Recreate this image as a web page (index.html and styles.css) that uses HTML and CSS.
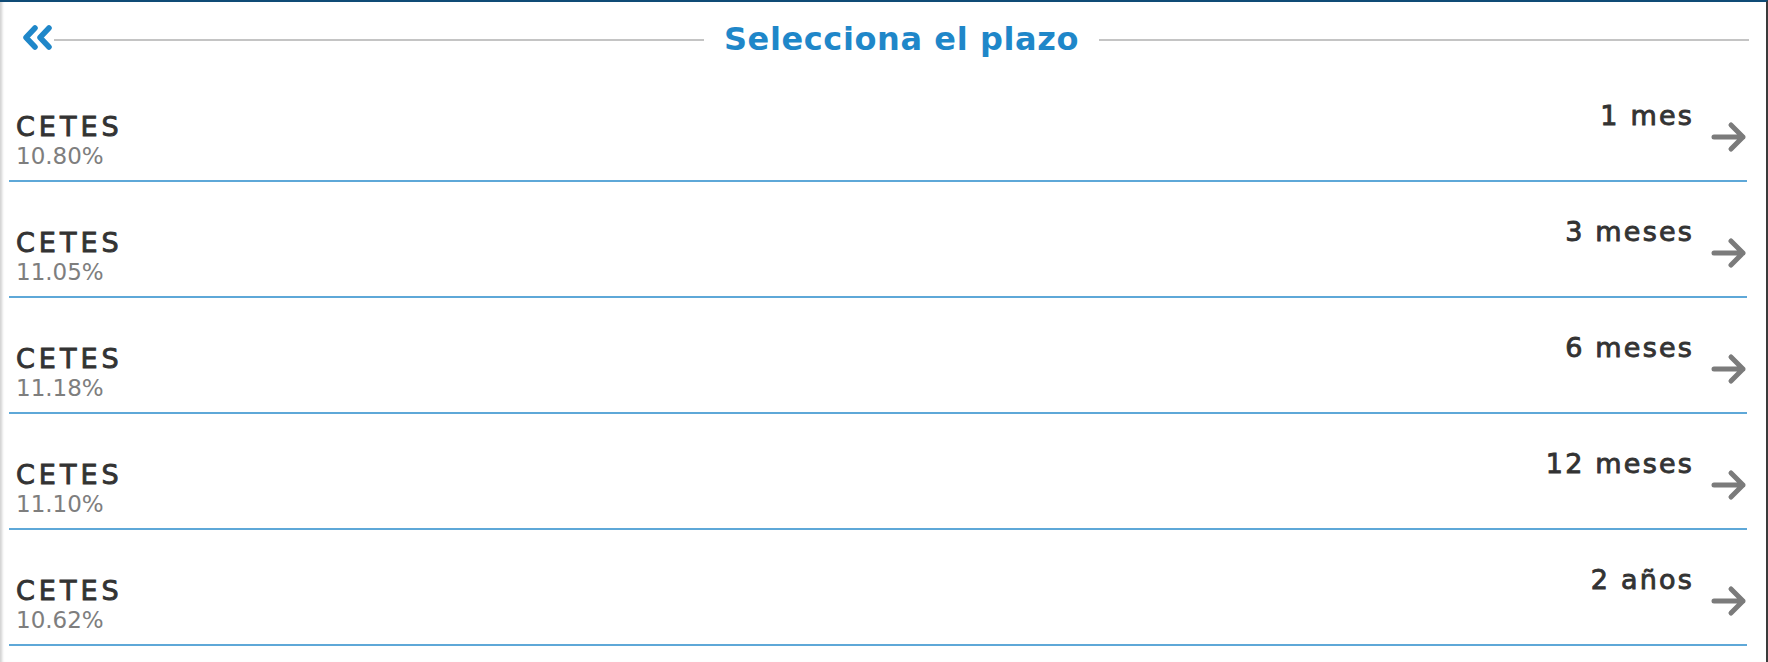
FILE: index.html
```html
<!DOCTYPE html>
<html lang="es">
<head>
<meta charset="utf-8">
<title>Selecciona el plazo</title>
<link rel="stylesheet" href="styles.css">
</head>
<body>
<div class="panel">
  <header class="head">
    <svg class="back" width="31" height="26" viewBox="0 0 31 26" aria-hidden="true">
      <polyline points="13,3 4,12.5 13,22" />
      <polyline points="27,3 18,12.5 27,22" />
    </svg>
    <span class="rule rule-left"></span>
    <h1 class="title">Selecciona el plazo</h1>
    <span class="rule rule-right"></span>
  </header>
  <ul class="list">
    <li class="row">
      <div class="info"><div class="name">CETES</div><div class="rate">10.80%</div></div>
      <div class="term">1 mes</div>
      <svg class="go" width="36" height="32" viewBox="0 0 36 32" aria-hidden="true"><path d="M3 16H32M20 4L32 16L20 28"/></svg>
    </li>
    <li class="row">
      <div class="info"><div class="name">CETES</div><div class="rate">11.05%</div></div>
      <div class="term">3 meses</div>
      <svg class="go" width="36" height="32" viewBox="0 0 36 32" aria-hidden="true"><path d="M3 16H32M20 4L32 16L20 28"/></svg>
    </li>
    <li class="row">
      <div class="info"><div class="name">CETES</div><div class="rate">11.18%</div></div>
      <div class="term">6 meses</div>
      <svg class="go" width="36" height="32" viewBox="0 0 36 32" aria-hidden="true"><path d="M3 16H32M20 4L32 16L20 28"/></svg>
    </li>
    <li class="row">
      <div class="info"><div class="name">CETES</div><div class="rate">11.10%</div></div>
      <div class="term">12 meses</div>
      <svg class="go" width="36" height="32" viewBox="0 0 36 32" aria-hidden="true"><path d="M3 16H32M20 4L32 16L20 28"/></svg>
    </li>
    <li class="row">
      <div class="info"><div class="name">CETES</div><div class="rate">10.62%</div></div>
      <div class="term">2 años</div>
      <svg class="go" width="36" height="32" viewBox="0 0 36 32" aria-hidden="true"><path d="M3 16H32M20 4L32 16L20 28"/></svg>
    </li>
  </ul>
</div>
</body>
</html>
```
FILE: styles.css
```css
* { box-sizing: border-box; }
html, body { margin: 0; padding: 0; background: #fff; }
body { font-family: "DejaVu Sans", "Liberation Sans", sans-serif; }

.panel {
  width: 1768px;
  height: 662px;
  border-top: 2px solid #0f4b76;
  border-right: 2px solid #3a3a3a;
  box-shadow: inset 4px 0 3px -2px #d0d0d0;
  overflow: hidden;
}

.head {
  height: 64px;
  display: flex;
  align-items: center;
  padding: 9px 17px 0 22px;
}
.back { flex: none; margin-top: -2px; }
.back polyline {
  fill: none;
  stroke: #1f87c9;
  stroke-width: 5.5;
  stroke-linecap: round;
  stroke-linejoin: round;
}
.rule { flex: 1 1 0; height: 2px; background: #c4c4c4; margin-top: 2px; }
.rule-left { margin-left: 1px; }
.title {
  margin: 0 20px;
  font-size: 32px;
  font-weight: 700;
  letter-spacing: 0.6px;
  color: #1f87c9;
  white-space: nowrap;
  line-height: 40px;
}

.list { list-style: none; margin: 0 19px 0 9px; padding: 0; }
.row {
  height: 116px;
  border-bottom: 2px solid #5ea8d8;
  display: flex;
  padding-left: 7px;
}
.info { flex: 1; align-self: flex-end; padding-bottom: 11px; }
.name {
  font-size: 27px;
  color: #333;
  -webkit-text-stroke: 0.9px #333;
  line-height: 30px;
  letter-spacing: 4px;
  margin-bottom: 1px;
}
.rate {
  font-size: 23px;
  color: #7e7e7e;
  line-height: 26px;
}
.term {
  margin-top: 33px;
  font-size: 27px;
  color: #333;
  -webkit-text-stroke: 0.9px #333;
  letter-spacing: 2.2px;
  line-height: 34px;
}
.go { flex: none; margin: 55px 0 0 17px; }
.go path {
  fill: none;
  stroke: #7b7b7b;
  stroke-width: 5;
  stroke-linecap: round;
  stroke-linejoin: round;
}
```
